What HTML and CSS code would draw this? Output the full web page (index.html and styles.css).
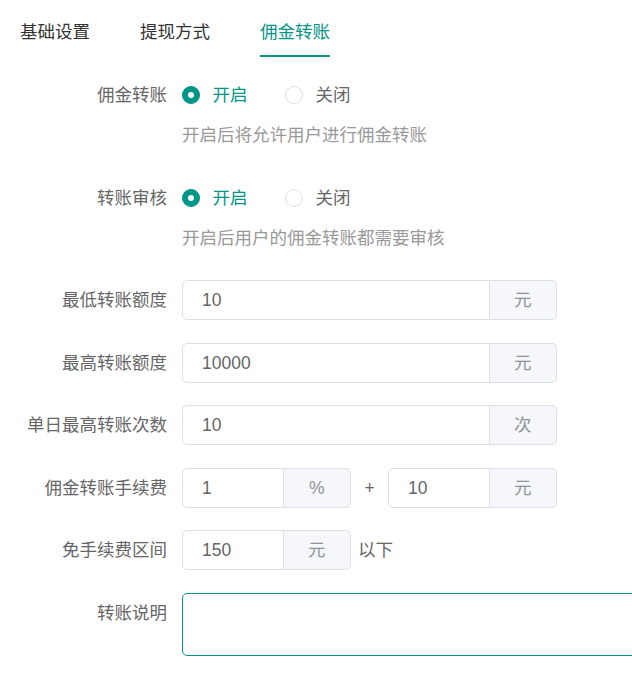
FILE: index.html
```html
<!DOCTYPE html>
<html lang="zh-CN">
<head>
<meta charset="utf-8">
<title>佣金转账</title>
<link rel="stylesheet" href="styles.css">
</head>
<body>
<div class="tabs">
  <div class="tab">基础设置</div>
  <div class="tab">提现方式</div>
  <div class="tab active">佣金转账</div>
</div>
<form class="form">
  <div class="item">
    <label class="label">佣金转账</label>
    <div class="content">
      <div class="radios">
        <span class="radio checked"><span class="dot"></span><span class="rtext">开启</span></span>
        <span class="radio"><span class="dot"></span><span class="rtext">关闭</span></span>
      </div>
      <div class="help">开启后将允许用户进行佣金转账</div>
    </div>
  </div>
  <div class="item">
    <label class="label">转账审核</label>
    <div class="content">
      <div class="radios">
        <span class="radio checked"><span class="dot"></span><span class="rtext">开启</span></span>
        <span class="radio"><span class="dot"></span><span class="rtext">关闭</span></span>
      </div>
      <div class="help">开启后用户的佣金转账都需要审核</div>
    </div>
  </div>
  <div class="item">
    <label class="label">最低转账额度</label>
    <div class="content">
      <div class="group wide"><div class="input">10</div><div class="append">元</div></div>
    </div>
  </div>
  <div class="item">
    <label class="label">最高转账额度</label>
    <div class="content">
      <div class="group wide"><div class="input">10000</div><div class="append">元</div></div>
    </div>
  </div>
  <div class="item">
    <label class="label">单日最高转账次数</label>
    <div class="content">
      <div class="group wide"><div class="input">10</div><div class="append">次</div></div>
    </div>
  </div>
  <div class="item">
    <label class="label">佣金转账手续费</label>
    <div class="content row">
      <div class="group small"><div class="input">1</div><div class="append">%</div></div>
      <span class="plus">+</span>
      <div class="group small"><div class="input">10</div><div class="append">元</div></div>
    </div>
  </div>
  <div class="item">
    <label class="label">免手续费区间</label>
    <div class="content row">
      <div class="group small"><div class="input">150</div><div class="append">元</div></div>
      <span class="suffix">以下</span>
    </div>
  </div>
  <div class="item">
    <label class="label">转账说明</label>
    <div class="content clip">
      <div class="textarea"></div>
    </div>
  </div>
</form>
</body>
</html>
```
FILE: styles.css
```css
html, body {
  margin: 0;
  padding: 0;
  overflow: hidden;
  background: #fff;
}
body {
  font-family: "Liberation Sans", "Noto Sans CJK SC", sans-serif;
  font-size: 17.5px;
  color: #666;
  width: 632px;
}
.tabs {
  display: flex;
  padding-left: 20px;
}
.tab {
  margin-right: 50px;
  padding-top: 9px;
  line-height: 46px;
  border-bottom: 2px solid transparent;
  color: #333;
  white-space: nowrap;
}
.tab.active {
  color: #009688;
  border-bottom-color: #009688;
}
.form {
  margin: 18px 0 0;
  width: 632px;
}
.item {
  display: flex;
  margin-bottom: 22.5px;
}
.label {
  width: 182px;
  flex: none;
  box-sizing: border-box;
  padding-right: 15px;
  text-align: right;
  line-height: 40px;
  white-space: nowrap;
}
.content {
  flex: 1;
  min-width: 0;
  line-height: 40px;
}
.content.clip {
  overflow: hidden;
}
.content.row {
  display: flex;
  align-items: center;
}
.radios {
  display: flex;
  align-items: center;
  height: 40px;
}
.radio {
  display: inline-flex;
  align-items: center;
  margin-right: 37.5px;
}
.dot {
  width: 18px;
  height: 18px;
  box-sizing: border-box;
  border: 1px solid #dcdfe6;
  border-radius: 50%;
  position: relative;
  background: #fff;
}
.radio.checked .dot {
  background: #009688;
  border-color: #009688;
}
.radio.checked .dot::after {
  content: "";
  position: absolute;
  left: 50%;
  top: 50%;
  width: 6px;
  height: 6px;
  margin: -3px 0 0 -3px;
  border-radius: 50%;
  background: #fff;
}
.rtext {
  padding-left: 12.5px;
}
.radio.checked .rtext {
  color: #009688;
}
.help {
  color: #999;
  line-height: 40px;
}
.group {
  display: flex;
  height: 40px;
}
.group.wide {
  width: 375px;
}
.group.small {
  width: 169px;
}
.input {
  flex: 1;
  box-sizing: border-box;
  border: 1px solid #dcdfe6;
  border-radius: 5px 0 0 5px;
  padding-left: 19px;
  line-height: 38px;
  color: #666;
}
.append {
  width: 67.5px;
  flex: none;
  box-sizing: border-box;
  border: 1px solid #dcdfe6;
  border-left: 0;
  border-radius: 0 5px 5px 0;
  background: #f5f7fa;
  color: #909399;
  text-align: center;
  line-height: 38px;
}
.plus {
  width: 37px;
  text-align: center;
}
.suffix {
  margin-left: 7px;
}
.textarea {
  width: 600px;
  height: 63px;
  box-sizing: border-box;
  border: 1.5px solid #009688;
  border-radius: 5px;
}
```
